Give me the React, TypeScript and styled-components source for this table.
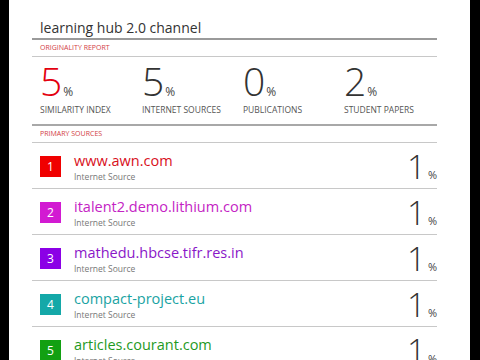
import React from "react";
import styled, { createGlobalStyle } from "styled-components";

const Global = createGlobalStyle`
  html, body { margin: 0; padding: 0; background: #000; }
  body { font-family: "Open Sans", "Liberation Sans", sans-serif; }
`;

const Frame = styled.div`
  width: 480px;
  height: 360px;
  background: #000;
  display: flex;
  overflow: hidden;
`;

const Sheet = styled.div`
  width: 461px;
  margin-left: 9px;
  background: #fff;
  padding: 0 33px 0 23px;
  box-sizing: border-box;
  overflow: hidden;
`;

const Title = styled.div`
  padding: 17px 0 0 8px;
  height: 21px;
  font-size: 14px;
  line-height: 21px;
  color: #333;
  border-bottom: 2px solid #9a9a9a;
`;

const SectionHead = styled.div`
  padding-left: 8px;
  height: 16px;
  line-height: 16px;
  font-size: 7px;
  color: #d23c44;
  border-bottom: 1px solid #c8c8c8;
`;

const Stats = styled.div`
  display: grid;
  grid-template-columns: 102px 101px 101px 100px;
  padding: 10px 0 0 8px;
  height: 57px;
  border-bottom: 2px solid #a8a8a8;
`;

const Stat = styled.div`
  display: flex;
  flex-direction: column;
`;

const Big = styled.div<{ $red?: boolean }>`
  font-size: 39px;
  font-weight: 300;
  line-height: 28px;
  color: ${(p) => (p.$red ? "#e3000f" : "#333")};
  span {
    font-size: 12px;
    font-weight: 400;
    color: #444;
    margin-left: 1px;
  }
`;

const Label = styled.div`
  font-size: 8.5px;
  line-height: 11px;
  color: #555;
  margin-top: -2px;
`;

const Row = styled.div`
  display: flex;
  align-items: flex-start;
  height: 46px;
  padding: 13px 0 0 8px;
  box-sizing: border-box;
  border-bottom: 1px solid #c8c8c8;
`;

const Badge = styled.div<{ $c: string }>`
  width: 21px;
  height: 21px;
  background: ${(p) => p.$c};
  color: #fff;
  font-size: 12px;
  display: flex;
  align-items: center;
  justify-content: center;
  flex-shrink: 0;
`;

const Info = styled.div`
  flex: 1;
  margin-left: 13px;
  margin-top: -6px;
`;

const Url = styled.div<{ $c: string }>`
  font-size: 14.5px;
  line-height: 22px;
  color: ${(p) => p.$c};
`;

const Kind = styled.div`
  font-size: 8.5px;
  color: #777;
  line-height: 10px;
`;

const Pct = styled.div`
  font-size: 33px;
  font-weight: 300;
  color: #333;
  line-height: 30px;
  margin-top: -4px;
  span {
    font-size: 11px;
    font-weight: 400;
    margin-left: 2px;
    color: #444;
  }
`;

const stats = [
  { v: "5", l: "SIMILARITY INDEX", red: true },
  { v: "5", l: "INTERNET SOURCES" },
  { v: "0", l: "PUBLICATIONS" },
  { v: "2", l: "STUDENT PAPERS" },
];

const sources = [
  { n: 1, url: "www.awn.com", bg: "#f00000", fg: "#d8101c" },
  { n: 2, url: "italent2.demo.lithium.com", bg: "#d21ad2", fg: "#c423c4" },
  { n: 3, url: "mathedu.hbcse.tifr.res.in", bg: "#8b00e6", fg: "#8a17c8" },
  { n: 4, url: "compact-project.eu", bg: "#14a8a8", fg: "#1aa3a3" },
  { n: 5, url: "articles.courant.com", bg: "#12a012", fg: "#1f9a1f" },
];

export default function App() {
  return (
    <Frame>
      <Global />
      <Sheet>
        <Title>learning hub 2.0 channel</Title>
        <SectionHead>ORIGINALITY REPORT</SectionHead>
        <Stats>
          {stats.map((s) => (
            <Stat key={s.l}>
              <Big $red={s.red}>
                {s.v}
                <span>%</span>
              </Big>
              <Label>{s.l}</Label>
            </Stat>
          ))}
        </Stats>
        <SectionHead>PRIMARY SOURCES</SectionHead>
        {sources.map((s) => (
          <Row key={s.n}>
            <Badge $c={s.bg}>{s.n}</Badge>
            <Info>
              <Url $c={s.fg}>{s.url}</Url>
              <Kind>Internet Source</Kind>
            </Info>
            <Pct>
              1<span>%</span>
            </Pct>
          </Row>
        ))}
      </Sheet>
    </Frame>
  );
}
